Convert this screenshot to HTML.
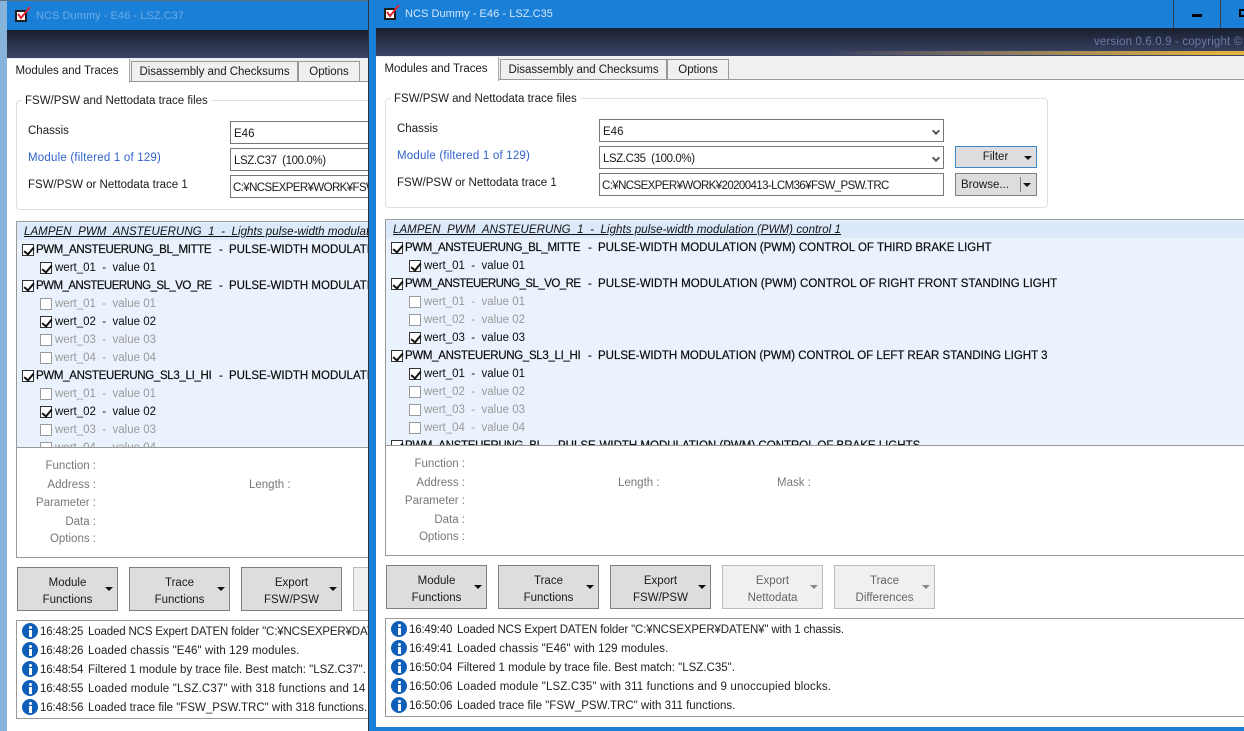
<!DOCTYPE html>
<html><head><meta charset="utf-8">
<style>
html,body{margin:0;padding:0;width:1244px;height:731px;overflow:hidden;background:#fff}
body{position:relative;font:11.5px "Liberation Sans","Noto Sans CJK JP",sans-serif;color:#1a1a1a}
div,span{box-sizing:border-box}
.win{position:absolute;top:0;height:731px;overflow:hidden;background:#fff}
.w{position:absolute;left:0;width:875px;height:731px}
.a{position:absolute;white-space:nowrap}
.edge{position:absolute;left:0;top:-2px;width:7px;height:740px}
.bar{position:absolute;left:0;top:-2px;width:875px;height:30px;background:#1a7fd7}
.icon{position:absolute;left:15px;top:8px;width:12px;height:12px;background:#fff;border:2px solid #1c1c1c}
.icon svg{position:absolute;left:-2px;top:-5px}
.title{position:absolute;left:36px;top:7px;font-size:11px;line-height:15px;letter-spacing:.05px}
.hdr{position:absolute;left:7px;top:28px;width:868px;height:28px;background:linear-gradient(#191f2e,#3c4568)}
.gold{position:absolute;left:0;bottom:1px;width:868px;height:4px;background:linear-gradient(90deg,rgba(226,176,60,0) 52%,#8a7a60 72%,#e2b03c 97%)}
.strip{position:absolute;left:7px;top:56px;width:868px;height:24px;background:#f0f0f0;border-bottom:1px solid #9a9a9a}
.tab{position:absolute;top:59px;height:21px;background:#f0f0f0;border:1px solid #999;text-align:center;line-height:21px;letter-spacing:-.03px}
.tab.on{left:7px;top:57px;width:123px;height:24px;background:#fff;border:0;border-right:1px solid #aaa;line-height:24px;padding-right:2px}
.grp{position:absolute;left:16px;top:98px;width:663px;height:110px;border:1px solid #d8e0e8;border-radius:4px}
.leg{position:absolute;left:22px;top:92px;padding:0 3px;background:#fff;line-height:15px}
.lbl{position:absolute;left:28px;line-height:15px}
.box{position:absolute;left:230px;width:345px;height:23px;border:1px solid #777;background:#fff;padding-left:3px;line-height:24px;white-space:nowrap;overflow:hidden}
.chev{position:absolute;right:4px;top:8px;width:6px;height:6px;border-right:2px solid #555;border-bottom:2px solid #555;transform:rotate(45deg) scale(.95)}
.btn{position:absolute;background:#ddd;border:1px solid #808080;text-align:center}
.tri{position:absolute;width:0;height:0;border-left:4px solid transparent;border-right:4px solid transparent;border-top:4px solid #111}
.list{position:absolute;left:16px;top:219px;width:870px;height:227px;border:1px solid #999;background:#eaf2fd;overflow:hidden}
.lh{position:absolute;left:0;top:1px;width:870px;height:17px;background:#dce9fa;padding-left:7px;font-style:italic;text-decoration:underline;line-height:18px;color:#111;white-space:nowrap;letter-spacing:.06px}
.rows{position:absolute;left:0;top:19px;width:870px}
.r,.s{position:relative;height:18px;line-height:18px;white-space:nowrap;color:#0c0c0c}
.r{padding-left:19px;-webkit-text-stroke:.2px #0c0c0c}
.r b{font-weight:normal;display:inline-block;width:176px}
.r em{font-style:normal;display:inline-block;width:10px;padding-left:7px}
.r u{text-decoration:none}
.s{padding-left:38px}
.s.d{color:#999}
.c{position:absolute;top:3px;left:5px;width:12px;height:12px;border:1px solid #333;background:#fff;-webkit-text-stroke:0}
.s .c{left:23px}
.s.d .c{border-color:#9a9a9a}
.on:not(.tab)::after{content:"";position:absolute;left:3px;top:0;width:4px;height:8px;border-right:2px solid #111;border-bottom:2px solid #111;transform:rotate(40deg)}
.det{position:absolute;left:16px;top:446px;width:870px;height:110px;border:1px solid #999;border-top:0;background:#fff}
.k{position:absolute;color:#777;line-height:15px;text-align:right}
.fb{position:absolute;top:565px;width:101px;height:44px;background:#ddd;border:1px solid #808080;text-align:center;line-height:17px;padding:7px 0 0 0}
.fb .tri{right:4px;top:19px}
.fb.d{background:#f0f0f0;border-color:#bbb;color:#666}
.fb.d .tri{border-top-color:#888}
.log{position:absolute;left:16px;top:618px;width:870px;height:99px;border:1px solid #999;background:#fff;overflow:hidden}
.l{position:absolute;left:40px;height:19px;line-height:19px;white-space:nowrap;color:#222}
.l i{font-style:normal;display:inline-block;width:48px;letter-spacing:-.2px}
.inf{position:absolute;left:-18px;top:0;width:16px;height:16px;border-radius:50%;background:#0f5fb8}
.inf::before{content:"";position:absolute;left:6.5px;top:2.5px;width:3px;height:3px;background:#fff;border-radius:50%}
.inf::after{content:"";position:absolute;left:6.5px;top:6.5px;width:3px;height:7px;background:#fff}
.foot{position:absolute;left:0;top:727px;width:875px;height:6px;background:#1a7fd7}
.p{letter-spacing:-.6px}
.m{letter-spacing:-.4px}
</style></head><body>

<!-- LEFT WINDOW -->
<div class="win" style="left:0;width:369px;border-right:1px solid #333">
<div class="w" style="top:2px">
<div class="edge" style="background:#86b4da"></div>
<div class="bar" style="left:7px"></div>
<div class="a" style="left:0;top:-2px;width:368px;height:1px;background:#5e6f80"></div>
<div class="icon"><svg width="20" height="20" viewBox="0 0 20 20"><path d="M3 7l3 4 9-11" fill="none" stroke="#e0222e" stroke-width="2"/></svg></div>
<div class="title" style="color:#6cacE6;top:7px">NCS Dummy - E46 - LSZ.C37</div>
<div class="hdr"></div>
<div class="strip"></div>
<div class="tab on">Modules and Traces</div>
<div class="tab" style="left:131px;width:167px">Disassembly and Checksums</div>
<div class="tab" style="left:298px;width:62px">Options</div>
<div class="grp"></div>
<div class="leg">FSW/PSW and Nettodata trace files</div>
<div class="lbl" style="top:122px">Chassis</div>
<div class="lbl" style="top:149px;color:#2f62cc;letter-spacing:.2px">Module (filtered 1 of 129)</div>
<div class="lbl" style="top:176px">FSW/PSW or Nettodata trace 1</div>
<div class="box" style="top:119px">E46</div>
<div class="box" style="top:146px"><span class="m">LSZ.C37&nbsp; (100.0%)</span></div>
<div class="box" style="top:173px;padding-left:2px"><span class="p">C:¥NCSEXPER¥WORK¥FSW_PSW.TRC</span></div>
<div class="list">
<div class="lh">LAMPEN_PWM_ANSTEUERUNG_1&nbsp; -&nbsp; Lights pulse-width modulation (PWM) control 1</div>
<div class="rows">
<div class="r"><span class="c on"></span><b style="letter-spacing:-.37px">PWM_ANSTEUERUNG_BL_MITTE</b><em>-</em><u>PULSE-WIDTH MODULATION (PWM) CONTROL OF THIRD BRAKE LIGHT</u></div>
<div class="s"><span class="c on"></span>wert_01&nbsp; -&nbsp; value 01</div>
<div class="r"><span class="c on"></span><b style="letter-spacing:-.54px">PWM_ANSTEUERUNG_SL_VO_RE</b><em>-</em><u>PULSE-WIDTH MODULATION (PWM) CONTROL OF RIGHT FRONT STANDING LIGHT</u></div>
<div class="s d"><span class="c"></span>wert_01&nbsp; -&nbsp; value 01</div>
<div class="s"><span class="c on"></span>wert_02&nbsp; -&nbsp; value 02</div>
<div class="s d"><span class="c"></span>wert_03&nbsp; -&nbsp; value 03</div>
<div class="s d"><span class="c"></span>wert_04&nbsp; -&nbsp; value 04</div>
<div class="r"><span class="c on"></span><b style="letter-spacing:-.32px">PWM_ANSTEUERUNG_SL3_LI_HI</b><em>-</em><u>PULSE-WIDTH MODULATION (PWM) CONTROL OF LEFT REAR STANDING LIGHT 3</u></div>
<div class="s d"><span class="c"></span>wert_01&nbsp; -&nbsp; value 01</div>
<div class="s"><span class="c on"></span>wert_02&nbsp; -&nbsp; value 02</div>
<div class="s d"><span class="c"></span>wert_03&nbsp; -&nbsp; value 03</div>
<div class="s d"><span class="c"></span>wert_04&nbsp; -&nbsp; value 04</div>
</div></div>
<div class="det"></div>
<div class="k" style="left:30px;width:66px;top:457px">Function :</div>
<div class="k" style="left:30px;width:66px;top:476px">Address :</div>
<div class="k" style="left:30px;width:66px;top:494px">Parameter :</div>
<div class="k" style="left:30px;width:66px;top:513px">Data :</div>
<div class="k" style="left:30px;width:66px;top:530px">Options :</div>
<div class="k" style="left:249px;top:476px">Length :</div>
<div class="fb" style="left:17px">Module<br>Functions<span class="tri"></span></div>
<div class="fb" style="left:129px">Trace<br>Functions<span class="tri"></span></div>
<div class="fb" style="left:241px">Export<br>FSW/PSW<span class="tri"></span></div>
<div class="fb d" style="left:353px">Export<br>Nettodata<span class="tri"></span></div>
<div class="log"></div>
<div class="l" style="top:621px"><span class="inf"></span><i>16:48:25</i><span style="letter-spacing:-.15px">Loaded NCS Expert DATEN folder "C:¥NCSEXPER¥DATEN¥" with 1 chassis.</span></div>
<div class="l" style="top:640px"><span class="inf"></span><i>16:48:26</i><span style="letter-spacing:.1px">Loaded chassis "E46" with 129 modules.</span></div>
<div class="l" style="top:659px"><span class="inf"></span><i>16:48:54</i>Filtered 1 module by trace file. Best match: "LSZ.C37".</div>
<div class="l" style="top:678px"><span class="inf"></span><i>16:48:55</i><span style="letter-spacing:.16px">Loaded module "LSZ.C37" with 318 functions and 14 unoccupied blocks.</span></div>
<div class="l" style="top:697px"><span class="inf"></span><i>16:48:56</i>Loaded trace file "FSW_PSW.TRC" with 318 functions.</div>
</div></div>

<!-- RIGHT WINDOW -->
<div class="win" style="left:369px;width:875px">
<div class="w" style="top:0">
<div class="edge" style="background:#1a7fd7"></div>
<div class="bar"></div>
<div class="icon"><svg width="20" height="20" viewBox="0 0 20 20"><path d="M3 7l3 4 9-11" fill="none" stroke="#e0222e" stroke-width="2"/></svg></div>
<div class="title" style="color:#d3e8fb;top:7px">NCS Dummy - E46 - LSZ.C35</div>
<div class="a" style="left:804px;top:0;width:1px;height:28px;background:#333f50"></div>
<div class="a" style="left:851px;top:0;width:1px;height:28px;background:#333f50"></div>
<div class="a" style="left:823px;top:14px;width:10px;height:3px;background:#000"></div>
<div class="a" style="left:870px;top:9px;width:10px;height:8px;border:2px solid #000"></div>
<div class="hdr"><div class="gold"></div></div>
<div class="a" style="left:725px;top:35px;color:#6a7ba8;line-height:15px;letter-spacing:.15px">version 0.6.0.9 - copyright ©</div>
<div class="strip"></div>
<div class="tab on">Modules and Traces</div>
<div class="tab" style="left:131px;width:167px">Disassembly and Checksums</div>
<div class="tab" style="left:298px;width:62px">Options</div>
<div class="grp"></div>
<div class="leg">FSW/PSW and Nettodata trace files</div>
<div class="lbl" style="top:122px">Chassis</div>
<div class="lbl" style="top:149px;color:#2f62cc;letter-spacing:.2px">Module (filtered 1 of 129)</div>
<div class="lbl" style="top:176px">FSW/PSW or Nettodata trace 1</div>
<div class="box" style="top:119px">E46<span class="chev"></span></div>
<div class="box" style="top:146px"><span class="m">LSZ.C35&nbsp; (100.0%)</span><span class="chev"></span></div>
<div class="box" style="top:173px;padding-left:2px"><span class="p">C:¥NCSEXPER¥WORK¥20200413-LCM36¥FSW_PSW.TRC</span></div>
<div class="btn" style="left:586px;top:146px;width:82px;height:22px;border-color:#3a86c8;line-height:20px;padding-right:1px">Filter<span class="tri" style="right:4px;top:9px"></span></div>
<div class="btn" style="left:586px;top:173px;width:82px;height:23px;line-height:22px;text-align:left;padding-left:5px">Browse...<span class="a" style="left:64px;top:3px;width:1px;height:15px;background:#808080"></span><span class="tri" style="right:5px;top:9px"></span></div>
<div class="list">
<div class="lh">LAMPEN_PWM_ANSTEUERUNG_1&nbsp; -&nbsp; Lights pulse-width modulation (PWM) control 1</div>
<div class="rows">
<div class="r"><span class="c on"></span><b style="letter-spacing:-.37px">PWM_ANSTEUERUNG_BL_MITTE</b><em>-</em><u style="letter-spacing:.015px">PULSE-WIDTH MODULATION (PWM) CONTROL OF THIRD BRAKE LIGHT</u></div>
<div class="s"><span class="c on"></span>wert_01&nbsp; -&nbsp; value 01</div>
<div class="r"><span class="c on"></span><b style="letter-spacing:-.54px">PWM_ANSTEUERUNG_SL_VO_RE</b><em>-</em><u style="letter-spacing:.055px">PULSE-WIDTH MODULATION (PWM) CONTROL OF RIGHT FRONT STANDING LIGHT</u></div>
<div class="s d"><span class="c"></span>wert_01&nbsp; -&nbsp; value 01</div>
<div class="s d"><span class="c"></span>wert_02&nbsp; -&nbsp; value 02</div>
<div class="s"><span class="c on"></span>wert_03&nbsp; -&nbsp; value 03</div>
<div class="r"><span class="c on"></span><b style="letter-spacing:-.32px">PWM_ANSTEUERUNG_SL3_LI_HI</b><em>-</em><u style="letter-spacing:-.005px">PULSE-WIDTH MODULATION (PWM) CONTROL OF LEFT REAR STANDING LIGHT 3</u></div>
<div class="s"><span class="c on"></span>wert_01&nbsp; -&nbsp; value 01</div>
<div class="s d"><span class="c"></span>wert_02&nbsp; -&nbsp; value 02</div>
<div class="s d"><span class="c"></span>wert_03&nbsp; -&nbsp; value 03</div>
<div class="s d"><span class="c"></span>wert_04&nbsp; -&nbsp; value 04</div>
<div class="r"><span class="c on"></span><b style="letter-spacing:-.3px;width:140px">PWM_ANSTEUERUNG_BL</b><em style="width:9px;padding-left:4px">-</em><u>PULSE-WIDTH MODULATION (PWM) CONTROL OF BRAKE LIGHTS</u></div>
</div></div>
<div class="det"></div>
<div class="k" style="left:30px;width:66px;top:457px">Function :</div>
<div class="k" style="left:30px;width:66px;top:476px">Address :</div>
<div class="k" style="left:30px;width:66px;top:494px">Parameter :</div>
<div class="k" style="left:30px;width:66px;top:513px">Data :</div>
<div class="k" style="left:30px;width:66px;top:530px">Options :</div>
<div class="k" style="left:249px;top:476px">Length :</div>
<div class="k" style="left:408px;top:476px">Mask :</div>
<div class="fb" style="left:17px">Module<br>Functions<span class="tri"></span></div>
<div class="fb" style="left:129px">Trace<br>Functions<span class="tri"></span></div>
<div class="fb" style="left:241px">Export<br>FSW/PSW<span class="tri"></span></div>
<div class="fb d" style="left:353px">Export<br>Nettodata<span class="tri"></span></div>
<div class="fb d" style="left:465px">Trace<br>Differences<span class="tri"></span></div>
<div class="log"></div>
<div class="l" style="top:621px"><span class="inf"></span><i>16:49:40</i><span style="letter-spacing:-.15px">Loaded NCS Expert DATEN folder "C:¥NCSEXPER¥DATEN¥" with 1 chassis.</span></div>
<div class="l" style="top:640px"><span class="inf"></span><i>16:49:41</i><span style="letter-spacing:.1px">Loaded chassis "E46" with 129 modules.</span></div>
<div class="l" style="top:659px"><span class="inf"></span><i>16:50:04</i>Filtered 1 module by trace file. Best match: "LSZ.C35".</div>
<div class="l" style="top:678px"><span class="inf"></span><i>16:50:06</i><span style="letter-spacing:.16px">Loaded module "LSZ.C35" with 311 functions and 9 unoccupied blocks.</span></div>
<div class="l" style="top:697px"><span class="inf"></span><i>16:50:06</i>Loaded trace file "FSW_PSW.TRC" with 311 functions.</div>
<div class="foot"></div>
</div></div>
</body></html>
